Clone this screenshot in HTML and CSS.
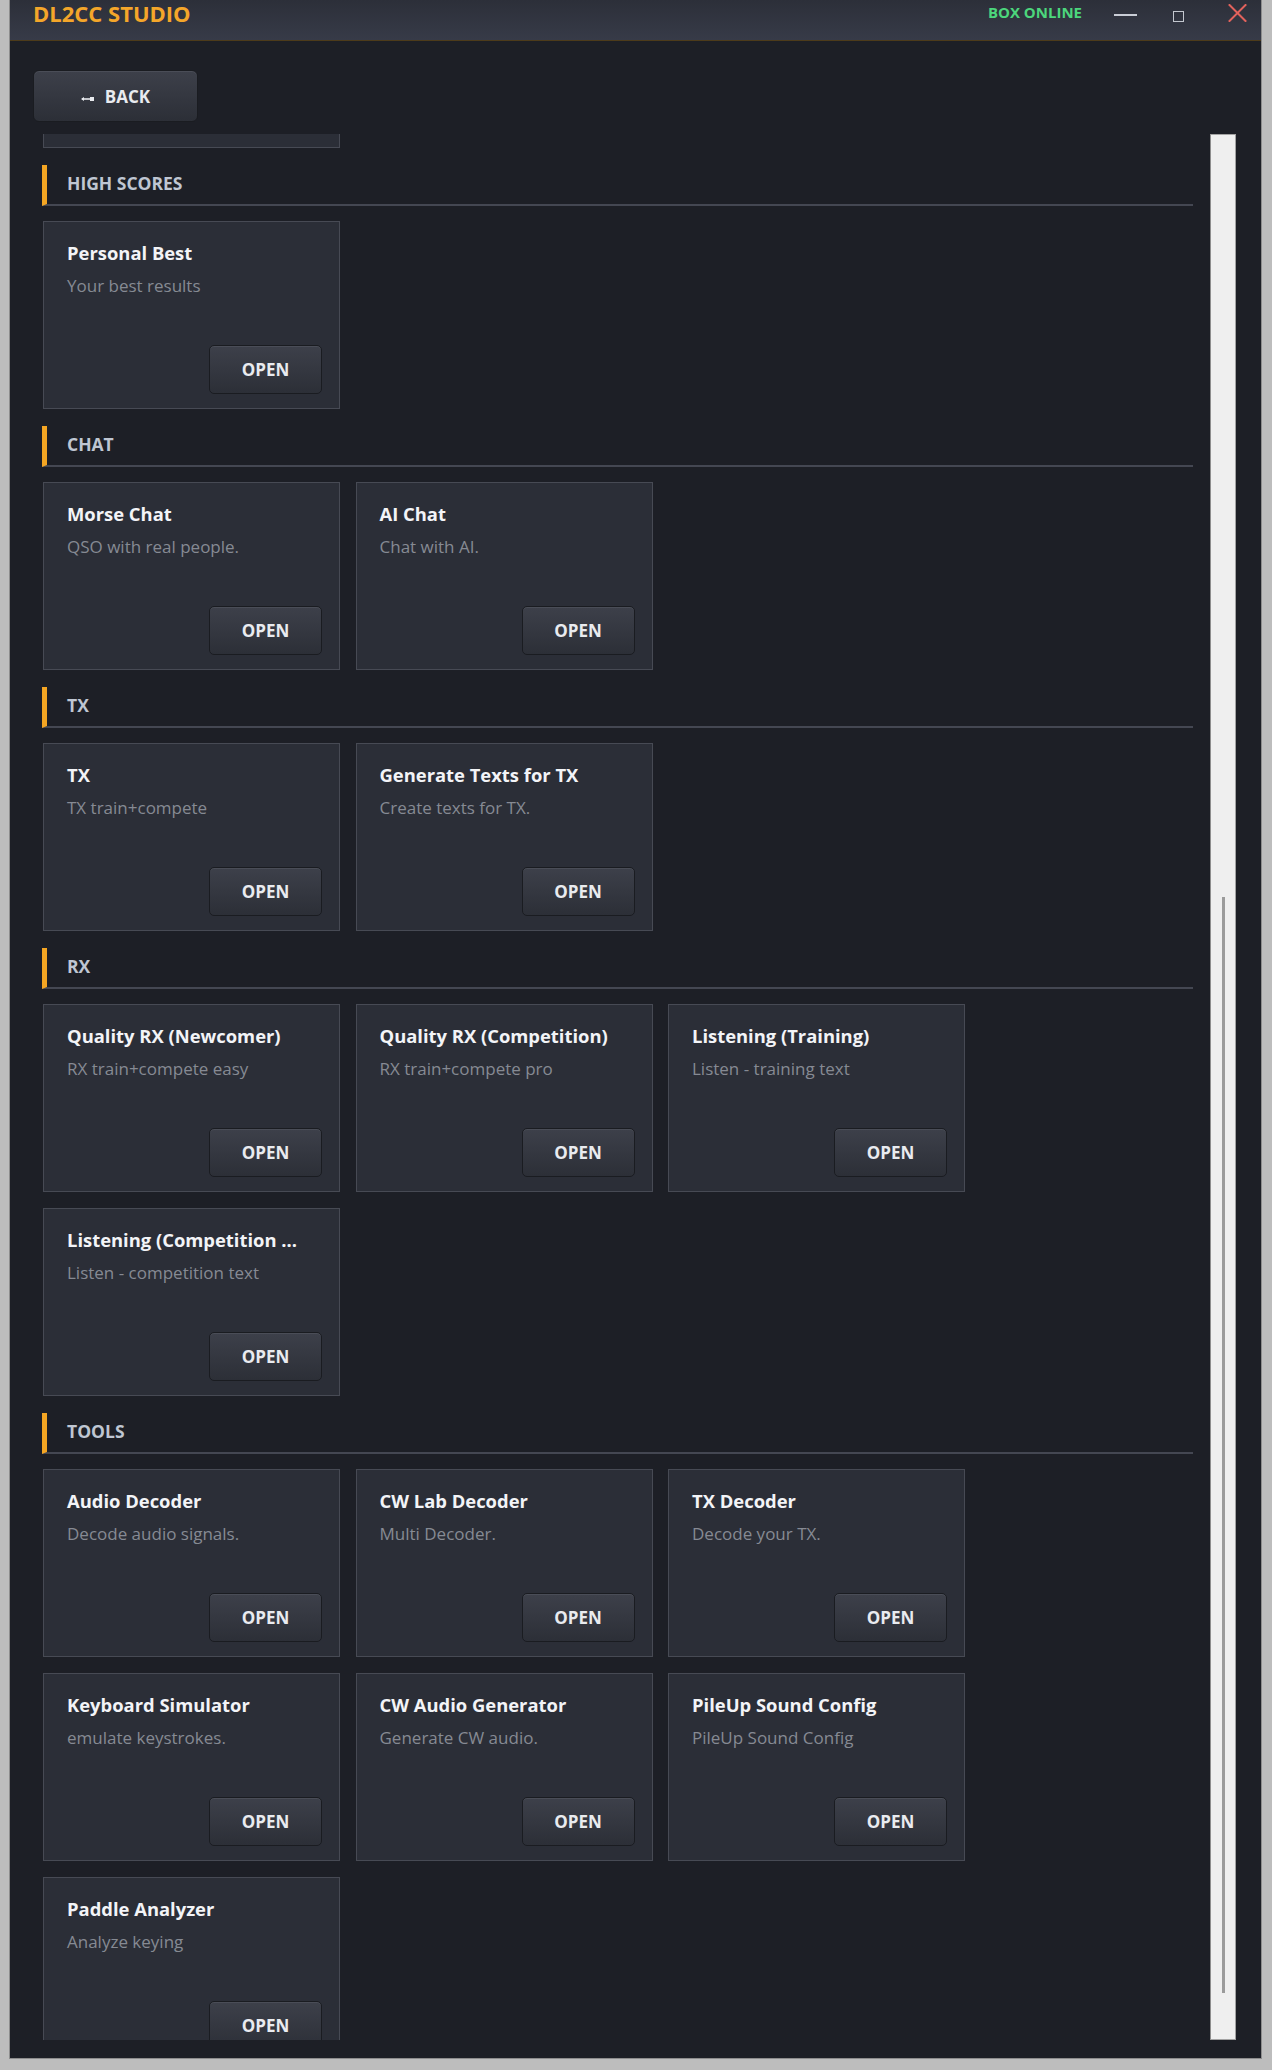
FILE: index.html
```html
<!DOCTYPE html>
<html lang="en">
<head>
<meta charset="utf-8">
<title>DL2CC STUDIO</title>
<link rel="stylesheet" href="styles.css">
</head>
<body>
<div class="frame">
  <div class="window">
    <header class="titlebar">
      <div class="app-title">DL2CC STUDIO</div>
      <div class="status">BOX ONLINE</div>
      <div class="ctrl ctrl-min"><span class="min-line"></span></div>
      <div class="ctrl ctrl-max"><span class="max-box"></span></div>
      <div class="ctrl ctrl-close">
        <svg width="19" height="18" viewBox="0 0 19 18"><path d="M1.5 1 L17.5 17 M17.5 1 L1.5 17" stroke="#e2625c" stroke-width="2" fill="none" stroke-linecap="square"/></svg>
      </div>
    </header>

    <div class="toolbar">
      <button class="btn back-btn">
        <svg class="back-arrow" width="14" height="8" viewBox="0 0 14 8"><path d="M1 5 L9 5" stroke="#e8eaee" stroke-width="1.6"/><path d="M0 5 L3 3 L3 7 Z" fill="#e8eaee"/><rect x="9" y="3" width="4" height="4" fill="#e8eaee"/></svg>
        <span>BACK</span>
      </button>
    </div>

    <div class="body-area">
      <div class="viewport">
        <div class="content">
          <div class="grid grid-prev">
            <div class="card card-empty"></div>
          </div>

          <section class="section">
            <h2 class="sec-head">HIGH SCORES</h2>
            <div class="grid">
              <div class="card"><div class="c-title">Personal Best</div><div class="c-sub">Your best results</div><button class="btn open-btn">OPEN</button></div>
            </div>
          </section>

          <section class="section">
            <h2 class="sec-head">CHAT</h2>
            <div class="grid">
              <div class="card"><div class="c-title">Morse Chat</div><div class="c-sub">QSO with real people.</div><button class="btn open-btn">OPEN</button></div>
              <div class="card"><div class="c-title">AI Chat</div><div class="c-sub">Chat with AI.</div><button class="btn open-btn">OPEN</button></div>
            </div>
          </section>

          <section class="section">
            <h2 class="sec-head">TX</h2>
            <div class="grid">
              <div class="card"><div class="c-title">TX</div><div class="c-sub">TX train+compete</div><button class="btn open-btn">OPEN</button></div>
              <div class="card"><div class="c-title">Generate Texts for TX</div><div class="c-sub">Create texts for TX.</div><button class="btn open-btn">OPEN</button></div>
            </div>
          </section>

          <section class="section">
            <h2 class="sec-head">RX</h2>
            <div class="grid">
              <div class="card"><div class="c-title">Quality RX (Newcomer)</div><div class="c-sub">RX train+compete easy</div><button class="btn open-btn">OPEN</button></div>
              <div class="card"><div class="c-title">Quality RX (Competition)</div><div class="c-sub">RX train+compete pro</div><button class="btn open-btn">OPEN</button></div>
              <div class="card"><div class="c-title">Listening (Training)</div><div class="c-sub">Listen - training text</div><button class="btn open-btn">OPEN</button></div>
              <div class="card"><div class="c-title">Listening (Competition ...</div><div class="c-sub">Listen - competition text</div><button class="btn open-btn">OPEN</button></div>
            </div>
          </section>

          <section class="section">
            <h2 class="sec-head">TOOLS</h2>
            <div class="grid">
              <div class="card"><div class="c-title">Audio Decoder</div><div class="c-sub">Decode audio signals.</div><button class="btn open-btn">OPEN</button></div>
              <div class="card"><div class="c-title">CW Lab Decoder</div><div class="c-sub">Multi Decoder.</div><button class="btn open-btn">OPEN</button></div>
              <div class="card"><div class="c-title">TX Decoder</div><div class="c-sub">Decode your TX.</div><button class="btn open-btn">OPEN</button></div>
              <div class="card"><div class="c-title">Keyboard Simulator</div><div class="c-sub">emulate keystrokes.</div><button class="btn open-btn">OPEN</button></div>
              <div class="card"><div class="c-title">CW Audio Generator</div><div class="c-sub">Generate CW audio.</div><button class="btn open-btn">OPEN</button></div>
              <div class="card"><div class="c-title">PileUp Sound Config</div><div class="c-sub">PileUp Sound Config</div><button class="btn open-btn">OPEN</button></div>
              <div class="card"><div class="c-title">Paddle Analyzer</div><div class="c-sub">Analyze keying</div><button class="btn open-btn">OPEN</button></div>
            </div>
          </section>
        </div>
      </div>
      <div class="scrollbar"><div class="thumb"></div></div>
    </div>
  </div>
</div>
</body>
</html>
```

FILE: styles.css
```css
* { box-sizing: border-box; }

html, body {
  margin: 0;
  padding: 0;
  background: #bcbcbc;
  font-family: "Open Sans", "Noto Sans", "DejaVu Sans", sans-serif;
}

.frame {
  width: 1272px;
  height: 2070px;
  padding: 0 11px 12px 10px;
  background: #bdbdbd;
}

.window {
  width: 1251px;
  height: 2058px;
  background: #1d1f26;
  box-shadow: 0 0 0 1px #8d8d8d;
  display: flex;
  flex-direction: column;
  overflow: hidden;
}

/* ---------- title bar ---------- */
.titlebar {
  height: 41px;
  flex: none;
  display: flex;
  align-items: flex-start;
  padding-left: 23px;
  background: linear-gradient(#2c2f39, #373b48);
  border-bottom: 1px solid #4d3b1a;
}

.app-title {
  font-size: 22px;
  line-height: 30px;
  font-weight: 700;
  color: #f4a62a;
  margin-top: -2px;
}

.status {
  margin-left: auto;
  margin-top: 4px;
  font-size: 15px;
  line-height: 16px;
  font-weight: 700;
  color: #4cd67c;
}

.ctrl {
  display: flex;
  justify-content: center;
  height: 24px;
}

.ctrl-min { width: 50px; margin-left: 18px; padding-top: 14px; }
.ctrl-max { width: 57px; padding-top: 11px; }
.ctrl-close { width: 54px; padding-top: 4px; padding-left: 6px; }

.min-line {
  display: block;
  width: 23px;
  height: 2px;
  background: #c9cdd6;
}

.max-box {
  display: block;
  width: 11px;
  height: 11px;
  border: 1.5px solid #c3c7cf;
}

/* ---------- buttons ---------- */
.btn {
  font-family: inherit;
  font-weight: 700;
  color: #e9ebef;
  background: linear-gradient(#3d404a, #2c2f37);
  border: 1px solid #1a1c21;
  border-radius: 5px;
  box-shadow: inset 0 1px 0 #4a4d57;
  cursor: pointer;
  padding: 0;
}

.toolbar {
  flex: none;
  height: 93px;
  padding: 29px 0 0 23px;
}

.back-btn {
  width: 165px;
  height: 52px;
  font-size: 17px;
  border-radius: 6px;
  display: flex;
  align-items: center;
  justify-content: center;
  gap: 10px;
}

.back-arrow { margin-top: 3px; }

/* ---------- body area ---------- */
.body-area {
  flex: none;
  height: 1906px;
  display: flex;
  padding-left: 32px;
}

.viewport {
  width: 1151px;
  height: 1906px;
  overflow: hidden;
}

.content {
  padding-top: 1px;
}

.grid {
  display: grid;
  grid-template-columns: repeat(3, 297px);
  column-gap: 15.5px;
  row-gap: 16px;
  padding-left: 1px;
}

.grid-prev {
  margin-top: -175px;
  margin-bottom: 17px;
}

.section {
  margin-bottom: 17px;
}

.sec-head {
  margin: 0 0 15px 0;
  height: 41px;
  display: flex;
  align-items: center;
  padding: 0 0 3px 20px;
  border-left: 5px solid #f5a623;
  border-bottom: 2px solid #444752;
  font-size: 17.5px;
  line-height: 24px;
  font-weight: 700;
  color: #bfc6d2;
}

.card {
  height: 188px;
  background: #2b2e37;
  border: 1px solid #474a54;
  display: flex;
  flex-direction: column;
  padding: 19px 17px 14px 23px;
}

.c-title {
  font-size: 18.4px;
  line-height: 24px;
  font-weight: 700;
  color: #f3f4f7;
  white-space: nowrap;
}

.c-sub {
  margin-top: 10px;
  font-size: 17px;
  line-height: 22px;
  color: #868a93;
  white-space: nowrap;
}

.open-btn {
  margin-top: auto;
  align-self: flex-end;
  width: 113px;
  height: 49px;
  font-size: 17px;
}

/* ---------- scrollbar ---------- */
.scrollbar {
  margin-left: 17px;
  width: 26px;
  height: 1906px;
  background: #efefef;
  border: 1px solid #a3a3a3;
  border-left-color: #8e8e8e;
}

.thumb {
  width: 3px;
  height: 1096px;
  margin: 762px auto 0;
  background: #9b9b9b;
}
```
